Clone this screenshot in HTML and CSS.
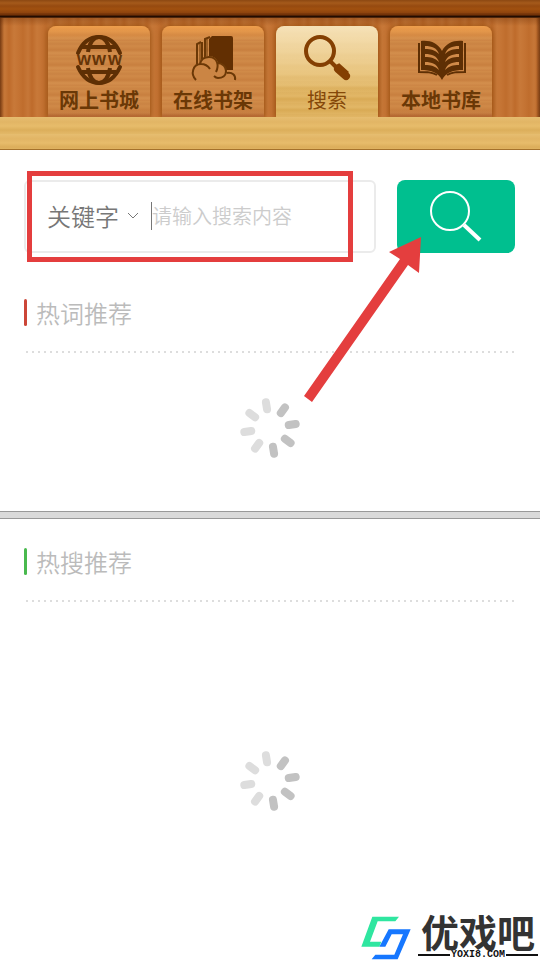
FILE: index.html
```html
<!DOCTYPE html>
<html lang="zh-CN">
<head>
    <meta charset="UTF-8">
    <meta name="viewport" content="width=device-width, initial-scale=1.0">
    <title>搜索</title>
    <link rel="stylesheet" href="styles.css">
</head>
<body>
    <header class="header">
        <div class="shelf-top"></div>
        <nav class="tabs">
            <a class="tab" href="#store">
                <svg class="tab-icon" viewBox="0 0 60 52" fill="none" stroke="#5e2f04" stroke-width="4">
                    <path d="M9 19C14 7 22 3 30 3s16 4 21 16M9 33c5 11 13 16 21 16s16-5 21-16" stroke-linecap="round"/>
                    <path d="M13 13h34M13 38h34M19 18C20 9 25 3 30 3s10 6 11 15M19 34c1 9 6 15 11 15s10-6 11-15"/>
                    <text class="globe-text" x="15" y="31" text-anchor="middle">w</text>
                    <text class="globe-text" x="30" y="31" text-anchor="middle">w</text>
                    <text class="globe-text" x="46" y="31" text-anchor="middle">w</text>
                </svg>
                <span>网上书城</span>
            </a>
            <a class="tab" href="#shelf">
                <svg class="tab-icon" viewBox="0 0 60 52" fill="none" stroke="#6b3806" stroke-width="2">
                    <path d="M26 26V5l3-3h19q2 0 2 2v32h-8z" fill="#622f02" stroke="none"/>
                    <path d="M14 30V10l4-2M19 25V8M22 24V5l5-2"/>
                    <path d="M17 30V9M24 23V5" stroke-width="1"/>
                    <path d="M13 46c-6-6-3-16 4-16 1-5 5-8 9-8 5 0 8 3 9 7 5 0 8 4 8 8l1 2c5-1 9 2 8 7v2H13z" fill="#cb8544" stroke="none"/>
                    <path d="M13 46c-6-6-3-16 5-16 4 0 7 2 9 5M17 30c1-5 5-7 9-7 9 0 10 9 7 15M34 29c6 0 9 4 9 8 0 5-4 7-8 7-2 0-3-1-4-2M44 39c5-1 9 2 8 7"/>
                </svg>
                <span>在线书架</span>
            </a>
            <a class="tab active" href="#search">
                <svg class="tab-icon" viewBox="0 0 60 52" fill="none" stroke="#843f02">
                    <circle cx="23" cy="17" r="14" stroke-width="4"/>
                    <path d="M33 27l7 7" stroke-width="4"/>
                    <path d="M41 35l8 7" stroke-width="8" stroke-linecap="round"/>
                    <path d="M38 33l4-2 9 8" stroke-width="3"/>
                </svg>
                <span>搜索</span>
            </a>
            <a class="tab" href="#local">
                <svg class="tab-icon" viewBox="0 0 60 52" fill="#5e2f04">
                    <path d="M10 7c9-1 17 2 21 10C35 9 43 6 52 7v29c-9 0-17 2-21 10-4-8-12-10-21-10z"/>
                    <path d="M8 9v29c8 0 13 0 18 3M54 9v29c-8 0-13 0-18 3" fill="none" stroke="#5e2f04" stroke-width="2"/>
                    <path d="M14 12c7 0 12 2 14 8-4-4-8-5-14-5zM14 20c7 0 12 2 14 8-4-4-8-5-14-5zM14 28c7 0 12 2 14 8-4-4-8-5-14-5zM48 12c-7 0-12 2-14 8 4-4 8-5 14-5zM48 20c-7 0-12 2-14 8 4-4 8-5 14-5zM48 28c-7 0-12 2-14 8 4-4 8-5 14-5z" fill="#d08a49"/>
                </svg>
                <span>本地书库</span>
            </a>
        </nav>
        <div class="shelf-strip"></div>
    </header>

    <main>
        <form class="search">
            <div class="search-box">
                <select class="search-type" aria-label="搜索类型">
                    <option>关键字</option>
                </select>
                <svg class="chevron" viewBox="0 0 12 8" fill="none" stroke="#777"><path d="M1 1l5 5 5-5"/></svg>
                <input class="search-input" type="text" aria-label="搜索内容" placeholder="请输入搜索内容">
            </div>
            <button class="search-button" type="submit" aria-label="搜索">
                <svg viewBox="0 0 52 52" fill="none" stroke="#fff">
                    <circle cx="20" cy="20" r="19" stroke-width="2"/>
                    <path d="M34 34l16 15" stroke-width="4"/>
                </svg>
            </button>
            <div class="mark-box"></div>
            <svg class="mark-arrow" viewBox="0 0 120 168" fill="#e43e3e">
                <path d="M118 0L86 15l11 7L1 159l8 6 96-137 11 8z"/>
            </svg>
        </form>

        <section class="panel">
            <h2 class="panel-title red">热词推荐</h2>
            <div class="panel-body">
                <svg class="spinner" viewBox="-30 -30 60 60" stroke="#c2c2c2" stroke-width="8" stroke-linecap="round">
                    <g transform="rotate(-9)">
                        <path d="M0-26v7M-26 0h7M-18-18l5 5M-18 18l5-5" stroke="#ddd"/>
                        <path d="M18-18l-5 5M26 0h-7M18 18l-5-5M0 26v-7"/>
                    </g>
                </svg>
            </div>
        </section>

        <div class="divider"></div>

        <section class="panel">
            <h2 class="panel-title green">热搜推荐</h2>
            <div class="panel-body tall">
                <svg class="spinner" viewBox="-30 -30 60 60" stroke="#c2c2c2" stroke-width="8" stroke-linecap="round">
                    <g transform="rotate(-9)">
                        <path d="M0-26v7M-26 0h7M-18-18l5 5M-18 18l5-5" stroke="#ddd"/>
                        <path d="M18-18l-5 5M26 0h-7M18 18l-5-5M0 26v-7"/>
                    </g>
                </svg>
            </div>
        </section>
    </main>

    <div class="brand">
        <svg class="brand-logo" viewBox="0 0 150 132">
            <path d="M34 2h80l-11 14H50L27 77h34l-6 15H1z" fill="#2fe6a0"/>
            <path d="M83 40h66l-39 90H32l11-14h57l26-61H92L73 92H55z" fill="#1677ff"/>
        </svg>
        <div class="brand-text">
            <div class="brand-name">优戏吧</div>
            <div class="brand-site">YOXI8.COM</div>
        </div>
    </div>
</body>
</html>
```

FILE: styles.css
```css
* {
    box-sizing: border-box;
}

body {
    position: relative;
    margin: 0;
    min-height: 100vh;
    background-color: #fff;
    font-family: "Noto Sans CJK SC", sans-serif;
}

/* wooden header */
.header {
    background:
        linear-gradient(90deg, rgba(70, 25, 0, 0.6), transparent 4px, transparent calc(100% - 4px), rgba(70, 25, 0, 0.6)),
        repeating-linear-gradient(90deg, #bf6d2d 0, #c67738 5px, #be6b2b 9px, #c87939 14px, #c47333 19px, #bf6d2d 23px);
}

.shelf-top {
    height: 18px;
    background: linear-gradient(#8c4812 0, #a55a1b 3px, #964a10 6px, #a0500f 9px, #8d430d 13px, #6b2f08 14px, #7b3608 15px, #240c00 16px, #210b00 17px, #7c4218 18px);
}

.tabs {
    display: flex;
    gap: 12px;
    padding: 8px 48px 0;
    background: linear-gradient(rgba(90, 35, 0, 0.3), transparent 8px);
}

.tab {
    display: flex;
    flex: 1;
    flex-direction: column;
    align-items: center;
    height: 91px;
    padding-top: 8px;
    border-radius: 8px 8px 0 0;
    background:
        linear-gradient(rgba(242, 160, 76, 0.9), transparent 14px, transparent 84px, rgba(150, 65, 25, 0.5)),
        repeating-linear-gradient(#d18c49 0, #ca8343 3px, #d08a48 5px, #c87f3f 9px, #d38f4d 12px, #cc8444 15px);
    box-shadow: 0 0 5px 1px rgba(130, 65, 0, 0.6);
    color: #6a3806;
    font-size: 20px;
    font-weight: 700;
    line-height: 28px;
    text-decoration: none;
}

.tab.active {
    background:
        linear-gradient(rgba(247, 228, 188, 0.95), rgba(238, 207, 144, 0.7) 45px, transparent 68px),
        repeating-linear-gradient(#ddb05e 0, #e2b767 4px, #d9aa55 7px, #e0b463 11px);
    color: #854809;
    font-weight: 400;
}

.tab-icon {
    width: 60px;
    height: 52px;
}

.globe-text {
    fill: #653407;
    stroke: none;
    font-family: "Liberation Sans", sans-serif;
    font-size: 18px;
    font-weight: 700;
}

.shelf-strip {
    position: relative;
    height: 33px;
    border-bottom: 1px solid #a5722c;
    background: repeating-linear-gradient(#e6bd70 0, #e2b565 5px, #e7bc6b 9px, #dcae5b 13px, #e3b868 17px);
}

/* search form */
.search {
    position: relative;
    display: flex;
    gap: 21px;
    padding: 30px 25px 0 24px;
}

.search-box {
    display: flex;
    flex: 1;
    align-items: center;
    min-width: 0;
    height: 73px;
    padding: 0 21px 2px;
    border: 2px solid #ebebeb;
    border-radius: 6px;
}

.search-type {
    width: 80px;
    padding: 0;
    border: 0;
    appearance: none;
    background: none;
    color: #777;
    font-family: inherit;
    font-size: 24px;
    font-weight: 350;
}

.chevron {
    width: 12px;
    height: 8px;
    margin-right: 12px;
}

.search-input {
    flex: 1;
    min-width: 0;
    height: 28px;
    padding: 0;
    border: 0;
    border-left: 1px solid #777;
    outline: 0;
    background: none;
    font-family: inherit;
    font-size: 20px;
    font-weight: 350;
}

.search-input::placeholder {
    color: #ccc;
}

.search-button {
    width: 118px;
    height: 73px;
    padding: 0;
    border: 0;
    border-radius: 8px;
    background-color: #00bf8f;
    cursor: pointer;
}

.search-button svg {
    width: 52px;
    height: 52px;
    vertical-align: middle;
}

.mark-box {
    position: absolute;
    top: 21px;
    left: 27px;
    width: 326px;
    height: 91px;
    border: 5px solid #e43e3e;
    pointer-events: none;
}

.mark-arrow {
    position: absolute;
    top: 87px;
    right: 117px;
    width: 120px;
    height: 168px;
    pointer-events: none;
}

/* recommendation panels */
.panel {
    padding: 29px 24px 0;
}

.search + .panel {
    padding-top: 46px;
}

.panel-title {
    display: flex;
    align-items: center;
    gap: 9px;
    height: 27px;
    margin: 0;
    color: #bbb;
    font-size: 24px;
    font-weight: 350;
}

.panel-title::before {
    content: "";
    width: 3px;
    height: 27px;
    border-radius: 2px;
}

.red::before {
    background-color: #cc4638;
}

.green::before {
    background-color: #49b94e;
}

.panel-body {
    display: flex;
    justify-content: center;
    height: 160px;
    margin-top: 25px;
    padding-top: 47px;
    background: radial-gradient(circle at 3px 1px, #ddd 1px, transparent 1px) 0 0 / 6px 3px repeat-x;
}

.panel-body.tall {
    height: 300px;
    padding-top: 151px;
}

.spinner {
    width: 60px;
    height: 60px;
}

.divider {
    height: 8px;
    border-top: 1px solid #999;
    border-bottom: 1px solid #999;
    background-color: #dadada;
}

/* site badge */
.brand {
    position: absolute;
    right: 2px;
    bottom: 0;
    display: flex;
    align-items: flex-end;
    gap: 7px;
}

.brand-logo {
    width: 50px;
    height: 44px;
}

.brand-text {
    width: 120px;
    color: #333;
}

.brand-name {
    font-size: 38px;
    font-weight: 700;
    line-height: 38px;
    text-align: center;
}

.brand-site {
    display: flex;
    align-items: center;
    gap: 1px;
    color: #111;
    font-family: "Liberation Mono", monospace;
    font-size: 10px;
    font-weight: 700;
    line-height: 10px;
}

.brand-site::before,
.brand-site::after {
    content: "";
    flex: 1;
    height: 2px;
    background-color: #111;
}
```
